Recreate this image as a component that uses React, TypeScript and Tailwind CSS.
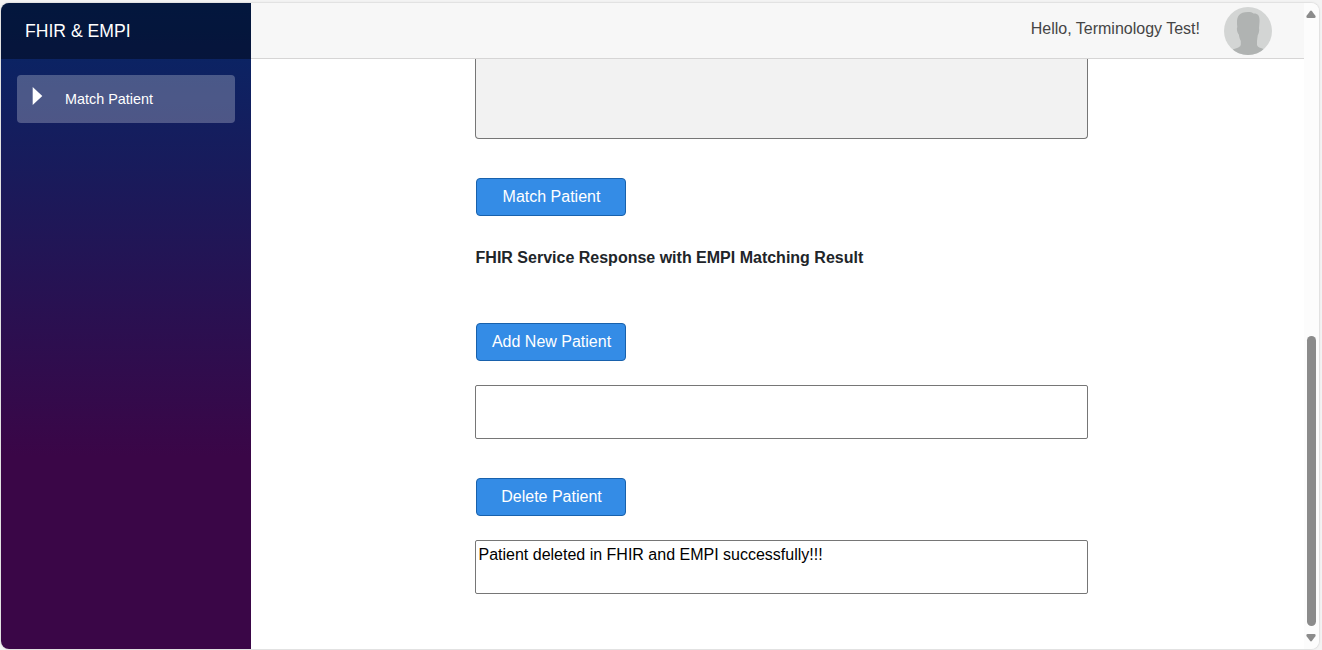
import type { ReactNode } from "react";

function ActionButton({ children }: { children: ReactNode }) {
  return (
    <button className="ml-px block h-[38px] w-[150px] rounded border border-[#1861ac] bg-[#348ce6] pb-px pl-px text-base leading-6 text-white">
      {children}
    </button>
  );
}

function OutputBox({ label, value }: { label: string; value: string }) {
  return (
    <textarea
      readOnly
      aria-label={label}
      value={value}
      className="block h-[54px] w-[613px] resize-none rounded-[2px] border border-[#767676] bg-white px-[2.5px] py-[2px] text-base leading-6 text-black"
    />
  );
}

function Avatar() {
  return (
    <svg className="h-12 w-12" viewBox="0 0 48 48" aria-hidden="true">
      <defs>
        <clipPath id="avatar-circle">
          <circle cx="24" cy="24" r="24" />
        </clipPath>
      </defs>
      <g clipPath="url(#avatar-circle)">
        <rect width="48" height="48" fill="#d3d5d4" />
        <path
          d="M13.300 20C12.300 12 13 5 24 5c2.500 0 4 .4 5.500 1.400C34.500 6.200 35.800 9 35.500 15L35 21.500c.5 1 0 5-1.200 6.500-.3 2-.6 4-.8 6V37.500c0 2.500 3 3.200 6.500 4.500L41 49H7l1.500-6.500C13 41 16.800 40 16.800 37.500V34c-1-2-1.600-4-2-6.500-1.500-1.500-2.500-5.500-1.500-7.500z"
          fill="#b0b3b2"
        />
      </g>
    </svg>
  );
}

function Sidebar() {
  return (
    <aside className="w-[250px] shrink-0 bg-[linear-gradient(180deg,rgb(5,39,103)_0%,#3a0647_70%)]">
      <div className="flex h-14 items-center bg-black/40 pl-6 text-[17.6px] text-white">
        FHIR &amp; EMPI
      </div>
      <nav className="px-4 pt-4">
        <a className="flex h-12 items-center rounded bg-white/25 pl-4 text-[14.4px] text-white">
          <svg className="-mt-[6px] h-[18px] w-8 overflow-visible" viewBox="0 0 32 18" aria-hidden="true">
            <path d="M-.3 0L9.300 9L-.3 18z" fill="white" />
          </svg>
          <span className="pt-px">Match Patient</span>
        </a>
      </nav>
    </aside>
  );
}

function Scrollbar() {
  return (
    <div className="flex w-[15px] shrink-0 flex-col items-center bg-[#fcfcfc] pt-[7px] pb-[7px]">
      <svg className="mr-px h-2 w-[10px]" viewBox="0 0 10 8" aria-hidden="true">
        <path d="M4 1.200Q5 0 6 1.200L9.600 6Q10 8 8.500 8H1.500Q0 8 .4 6z" fill="#8b8b8b" />
      </svg>
      <div className="mt-[318px] h-[290px] w-[9px] rounded-full bg-[#8b8b8b]" />
      <svg className="mt-[8px] mr-px h-2 w-[10px]" viewBox="0 0 10 8" aria-hidden="true">
        <path d="M4 6.800Q5 8 6 6.800L9.600 2Q10 0 8.500 0H1.500Q0 0 .4 2z" fill="#8b8b8b" />
      </svg>
    </div>
  );
}

export default function App() {
  return (
    <div className="h-[650px] w-[1322px] overflow-hidden bg-[#f3f3f3] pt-[3px] pl-px font-['Liberation_Sans',Arial,sans-serif]">
      <div className="flex h-[646px] w-[1318px] overflow-hidden rounded-lg bg-white shadow-[0_0_2px_rgba(0,0,0,0.25)]">
        <Sidebar />
        <main className="flex min-w-0 flex-1 flex-col">
          <header className="flex h-14 shrink-0 items-center justify-end border-b border-[#d6d5d5] bg-[#f7f7f7] pr-8">
            <span className="mr-6 pb-[3px] text-base text-[#454545]">
              Hello, Terminology Test!
            </span>
            <Avatar />
          </header>
          <section className="pl-[224px]">
            <div className="h-20 w-[613px] rounded-b border border-t-0 border-[#767676] bg-[#f2f2f2]" />
            <div className="pt-[39px]">
              <ActionButton>Match Patient</ActionButton>
            </div>
            <h2 className="mt-[30px] pl-[0.6px] text-base leading-6 font-bold text-[#212529]">
              FHIR Service Response with EMPI Matching Result
            </h2>
            <div className="mt-[53px] flex flex-col gap-6">
              <ActionButton>Add New Patient</ActionButton>
              <OutputBox label="New patient result" value="" />
            </div>
            <div className="mt-[39px] flex flex-col gap-6">
              <ActionButton>Delete Patient</ActionButton>
              <OutputBox
                label="Delete patient result"
                value="Patient deleted in FHIR and EMPI successfully!!!"
              />
            </div>
          </section>
        </main>
        <Scrollbar />
      </div>
    </div>
  );
}
